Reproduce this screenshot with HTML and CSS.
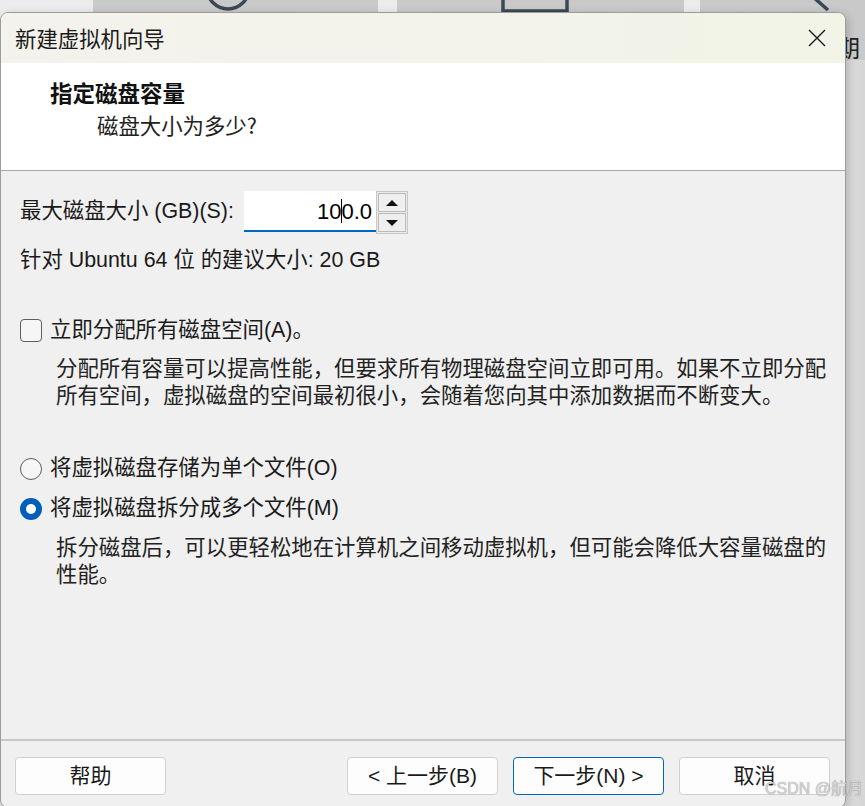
FILE: index.html
```html
<!DOCTYPE html>
<html lang="zh-CN">
<head>
<meta charset="utf-8">
<title>新建虚拟机向导</title>
<link rel="stylesheet" href="styles.css">
</head>
<body>
<div class="desktop">
  <div class="strip">
    <div class="panel light w93"></div>
    <div class="panel gray w285">
      <svg class="deco" width="285" height="40" viewBox="0 0 285 40"><circle cx="135" cy="-12" r="21" fill="none" stroke="#3b4856" stroke-width="3.5"/></svg>
    </div>
    <div class="panel light w19"></div>
    <div class="panel gray w287">
      <svg class="deco" width="287" height="40" viewBox="0 0 287 40"><rect x="106" y="-20" width="64" height="31" fill="none" stroke="#3b4856" stroke-width="3.5"/></svg>
    </div>
    <div class="panel light w16"></div>
    <div class="panel gray flex1">
      <svg class="deco" width="165" height="40" viewBox="0 0 165 40"><line x1="112" y1="-4" x2="128" y2="10" stroke="#3b4856" stroke-width="3.5"/></svg>
    </div>
  </div>
  <div class="behind-text">期</div>

  <div class="dialog">
    <div class="titlebar">
      <span class="title">新建虚拟机向导</span>
      <svg class="close" width="18" height="18" viewBox="0 0 18 18"><path d="M1 1 L17 17 M17 1 L1 17" stroke="#1b1b1b" stroke-width="1.4" fill="none"/></svg>
    </div>
    <div class="header">
      <div class="h-title">指定磁盘容量</div>
      <div class="h-sub">磁盘大小为多少?</div>
    </div>
    <div class="content">
      <div class="size-row">
        <span class="size-label">最大磁盘大小 (GB)(S):</span>
        <div class="spin-input">10<span class="caret"></span>0.0</div>
        <div class="spinner">
          <div class="spin-btn"><span class="tri-up"></span></div>
          <div class="spin-btn"><span class="tri-down"></span></div>
        </div>
      </div>
      <div class="hint">针对 Ubuntu 64 位 的建议大小: 20 GB</div>

      <div class="option check-row">
        <span class="checkbox"></span>
        <span>立即分配所有磁盘空间(A)。</span>
      </div>
      <div class="desc">分配所有容量可以提高性能，但要求所有物理磁盘空间立即可用。如果不立即分配<br>所有空间，虚拟磁盘的空间最初很小，会随着您向其中添加数据而不断变大。</div>

      <div class="option radio-row first">
        <span class="radio"></span>
        <span>将虚拟磁盘存储为单个文件(O)</span>
      </div>
      <div class="option radio-row second">
        <span class="radio checked"></span>
        <span>将虚拟磁盘拆分成多个文件(M)</span>
      </div>
      <div class="desc second-desc">拆分磁盘后，可以更轻松地在计算机之间移动虚拟机，但可能会降低大容量磁盘的<br>性能。</div>
    </div>
    <div class="footer">
      <button class="btn">帮助</button>
      <div class="btn-group">
        <button class="btn">&lt; 上一步(B)</button>
        <button class="btn primary">下一步(N) &gt;</button>
        <button class="btn">取消</button>
      </div>
    </div>
  </div>

  <div class="watermark">CSDN @航月</div>
</div>
</body>
</html>
```
FILE: styles.css
```css
* { box-sizing: border-box; }
html, body { margin: 0; padding: 0; }
body {
  width: 865px;
  height: 806px;
  overflow: hidden;
  font-family: "Liberation Sans", "Noto Sans CJK SC", sans-serif;
  color: #111;
}
.desktop {
  position: relative;
  width: 865px;
  height: 806px;
  background: linear-gradient(to right, #e4e4e4 0, #dcdcdc 840px, #d6d6d6 865px);
}
.strip {
  display: flex;
  height: 60px;
}
.panel { height: 60px; position: relative; overflow: hidden; }
.panel.light { background: #ececec; }
.panel.gray { background: #c9c9c9; }
.w93 { width: 93px; }
.w285 { width: 285px; }
.w19 { width: 19px; }
.w287 { width: 287px; }
.w16 { width: 16px; }
.flex1 { flex: 1; }
.deco { display: block; }

.behind-text {
  position: absolute;
  left: 836px;
  top: 33px;
  font-family: "Noto Sans CJK SC", sans-serif;
  font-size: 24px;
  line-height: 28px;
  color: #222;
}

.dialog {
  position: absolute;
  left: 0;
  top: 12px;
  width: 846px;
  height: 796px;
  border: 1px solid #9c9c9c;
  border-radius: 8px;
  overflow: hidden;
  display: flex;
  flex-direction: column;
  background: #f0f0f0;
  box-shadow: 2px 2px 8px rgba(0,0,0,0.18);
}
.titlebar {
  height: 50px;
  flex: none;
  display: flex;
  align-items: center;
  justify-content: space-between;
  padding: 0 19px 0 14px;
  background: linear-gradient(to right, #f4f2ec, #f3f3ea 60%, #f1f4e6);
}
.title {
  font-family: "Noto Sans CJK SC", sans-serif;
  font-size: 21.4px;
  line-height: 28px;
  color: #1a1a1a;
}
.close { display: block; }

.header {
  height: 108px;
  flex: none;
  background: #fff;
  border-bottom: 1px solid #a8a8a8;
  padding: 15px 0 0 49px;
}
.h-title {
  font-family: "Noto Sans CJK SC", sans-serif;
  font-weight: 700;
  font-size: 22.5px;
  line-height: 28px;
  color: #111;
}
.h-sub {
  font-family: "Noto Sans CJK SC", sans-serif;
  font-size: 21.4px;
  line-height: 28px;
  margin: 5px 0 0 47px;
  color: #222;
}

.content {
  height: 568px;
  flex: none;
  padding: 20px 0 0 19px;
  font-size: 21.4px;
  line-height: 27px;
  color: #1a1a1a;
}
.size-row {
  display: flex;
  align-items: flex-start;
  height: 43px;
}
.size-label {
  width: 224px;
  height: 41px;
  display: flex;
  align-items: center;
  white-space: nowrap;
}
.spin-input {
  width: 132px;
  height: 41px;
  background: #fff;
  border-bottom: 2px solid #0067c0;
  text-align: right;
  padding: 6px 4px 0 0;
  font-size: 22px;
  line-height: 30px;
  color: #000;
}
.caret {
  display: inline-block;
  width: 1px;
  height: 24px;
  background: #000;
  vertical-align: -4px;
  margin: 0 -1px 0 0;
}
.spinner {
  width: 32px;
  height: 43px;
  border: 1px solid #c6c6c6;
  background: #ececec;
  display: flex;
  flex-direction: column;
  padding: 1px;
  gap: 1px;
}
.spin-btn {
  flex: 1;
  border: 1px solid #b9b9b9;
  background: #efefef;
  display: flex;
  align-items: center;
  justify-content: center;
}
.tri-up {
  width: 0; height: 0;
  border-left: 6px solid transparent;
  border-right: 6px solid transparent;
  border-bottom: 6px solid #111;
}
.tri-down {
  width: 0; height: 0;
  border-left: 6px solid transparent;
  border-right: 6px solid transparent;
  border-top: 6px solid #111;
}
.hint {
  margin-top: 13px;
  height: 27px;
}
.option {
  display: flex;
  align-items: center;
  gap: 8px;
  height: 27px;
}
.check-row { margin-top: 43px; }
.checkbox {
  width: 22px;
  height: 23px;
  border: 1px solid #5d5d5d;
  border-radius: 4px;
  background: #f6f6f6;
  flex: none;
}
.desc {
  margin: 12px 0 0 36px;
  color: #222;
}
.radio-row.first { margin-top: 45px; }
.radio-row.second { margin-top: 13px; }
.radio {
  width: 22px;
  height: 22px;
  border-radius: 50%;
  border: 1px solid #5d5d5d;
  background: #f6f6f6;
  flex: none;
  position: relative;
}
.radio.checked {
  border: none;
  background: #005fb8;
}
.radio.checked::after {
  content: "";
  position: absolute;
  left: 6px;
  top: 6px;
  width: 10px;
  height: 10px;
  border-radius: 50%;
  background: #fff;
}
.second-desc { margin-top: 13px; }

.footer {
  flex: 1;
  border-top: 2px solid #c8c8c8;
  display: flex;
  justify-content: space-between;
  align-items: flex-start;
  padding: 16px 15px 0 14px;
}
.btn-group {
  display: flex;
  gap: 15px;
}
.btn {
  width: 151px;
  height: 38px;
  border: 1px solid #d0d0d0;
  border-radius: 4px;
  background: #fdfdfd;
  font-family: "Liberation Sans", "Noto Sans CJK SC", sans-serif;
  font-size: 21px;
  line-height: 34px;
  color: #1a1a1a;
  padding: 0;
  margin: 0;
}
.btn.primary {
  border-color: #0067c0;
}

.watermark {
  position: absolute;
  left: 765px;
  top: 779px;
  font-family: "Liberation Sans", "Noto Sans CJK SC", sans-serif;
  font-size: 16px;
  line-height: 20px;
  color: #d4d4d4;
  text-shadow: 0 0 1px rgba(0,0,0,0.45);
}
```
